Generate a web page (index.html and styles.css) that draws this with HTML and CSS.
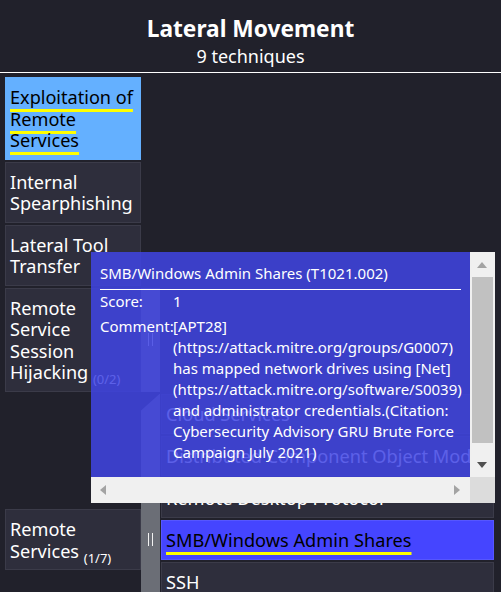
FILE: index.html
```html
<!DOCTYPE html>
<html>
<head>
<meta charset="utf-8">
<link rel="stylesheet" href="styles.css">
</head>
<body>
<div class="tactic">
  <div class="tactic-header">
    <div class="tactic-name">Lateral Movement</div>
    <div class="tactic-count">9 techniques</div>
  </div>
  <div class="rows">
    <div class="row">
      <div class="tech selected"><span class="mark">Exploitation of</span><br><span class="mark">Remote</span><br><span class="mark">Services</span></div>
    </div>
    <div class="row">
      <div class="tech">Internal<br>Spearphishing</div>
    </div>
    <div class="row">
      <div class="tech">Lateral Tool<br>Transfer</div>
    </div>
    <div class="row">
      <div class="tech">Remote<br>Service<br>Session<br>Hijacking <span class="ratio">(0/2)</span></div>
      <div class="sidebar"><span class="grip"></span></div>
    </div>
    <div class="row">
      <div class="tech centered">Remote<br>Services <span class="ratio">(1/7)</span></div>
      <div class="sidebar expanded"><span class="grip"></span></div>
      <div class="subs">
        <div class="sub">Cloud Services</div>
        <div class="sub">Distributed Component Object Model</div>
        <div class="sub">Remote Desktop Protocol</div>
        <div class="sub selected"><span class="mark">SMB/Windows Admin Shares</span></div>
        <div class="sub">SSH</div>
        <div class="sub">VNC</div>
        <div class="sub">Windows Remote Management</div>
      </div>
    </div>
  </div>
</div>

<div class="tooltip">
  <div class="tt-body">
    <div class="tt-title">SMB/Windows Admin Shares (T1021.002)</div>
    <div class="tt-grid">
      <div class="tt-label">Score:</div>
      <div class="tt-value">1</div>
      <div class="tt-label">Comment:</div>
      <div class="tt-value">[APT28] (https://attack.mitre.org/groups/G0007) has mapped network drives using [Net] (https://attack.mitre.org/software/S0039) and administrator credentials.(Citation: Cybersecurity Advisory GRU Brute Force Campaign July 2021)</div>
    </div>
  </div>
  <div class="vscroll">
    <span class="arrow up"></span>
    <span class="vthumb"></span>
    <span class="arrow down"></span>
  </div>
  <div class="hscroll">
    <span class="arrow left"></span>
    <span class="arrow right"></span>
  </div>
  <div class="corner"></div>
</div>
</body>
</html>
```
FILE: styles.css
```css
* { box-sizing: border-box; }

html, body {
  margin: 0;
  padding: 0;
}

body {
  width: 501px;
  height: 592px;
  overflow: hidden;
  position: relative;
  background: #21212b;
  color: #ffffff;
  font-family: "Noto Sans", "Open Sans", sans-serif;
}

.tactic-header {
  height: 73px;
  padding-top: 16px;
  text-align: center;
  border-bottom: 1px solid #ffffff;
}

.tactic-name {
  font-weight: 700;
  font-size: 22.7px;
  line-height: 26px;
}

.tactic-count {
  font-size: 18px;
  line-height: 22px;
  margin-top: 3px;
}

.rows {
  padding: 4px 0 0 5px;
}

.row {
  display: grid;
  grid-template-columns: 136px 20px 333px;
  margin-bottom: 2px;
}

.tech {
  grid-column: 1;
  background: #2e2e3c;
  border: 1px solid #3b3b49;
  padding: 9px 1px 7px 4px;
  font-size: 18.1px;
  line-height: 21.5px;
  color: #ffffff;
  white-space: nowrap;
}

.tech.centered {
  align-self: center;
}

.tech.selected {
  background: #64b0ff;
  border-color: #64b0ff;
  color: #000000;
}

.mark {
  text-decoration: underline;
  text-decoration-color: #ffff00;
  text-decoration-thickness: 3px;
  text-underline-offset: 5px;
}

.ratio {
  font-size: 13px;
  vertical-align: sub;
  line-height: 0;
}

.sidebar {
  grid-column: 2;
  width: 19px;
  background: #6b6e76;
  display: flex;
  align-items: center;
  justify-content: center;
}

.sidebar.expanded {
  clip-path: polygon(0 17px, 100% 0, 100% 100%, 0 100%);
}

.grip {
  width: 5px;
  height: 13px;
  border-left: 1px solid #f2f2f2;
  border-right: 1px solid #f2f2f2;
}

.subs {
  grid-column: 3;
  display: flex;
  flex-direction: column;
  gap: 2px;
}

.sub {
  height: 40px;
  background: #2e2e3c;
  border: 1px solid #3b3b49;
  padding: 9px 4px 0;
  font-size: 18.2px;
  line-height: 21.5px;
  white-space: nowrap;
}

.sub.selected {
  background: #4545ff;
  border-color: #5656ff;
  color: #000000;
}

/* tooltip */
.tooltip {
  position: absolute;
  left: 91px;
  top: 252px;
  width: 404px;
  height: 251px;
  display: grid;
  grid-template-columns: 379px 25px;
  grid-template-rows: 225px 26px;
}

.tt-body {
  background: rgba(64, 68, 228, 0.85);
  padding: 11px 9px 0;
  font-size: 15px;
  line-height: 21px;
  color: #ffffff;
  overflow: hidden;
}

.tt-title {
  padding-bottom: 5px;
  border-bottom: 1px solid #ffffff;
  white-space: nowrap;
}

.tt-grid {
  display: grid;
  grid-template-columns: 73px minmax(0, 1fr);
  row-gap: 4px;
  padding-top: 1px;
}

.vscroll {
  background: #f0f0f0;
  position: relative;
}

.vthumb {
  position: absolute;
  left: 2px;
  right: 2px;
  top: 25px;
  height: 166px;
  background: #c1c1c1;
}

.hscroll {
  background: #f0f0f0;
  position: relative;
}

.corner {
  background: #dcdcdc;
}

.arrow {
  position: absolute;
  width: 0;
  height: 0;
  border-style: solid;
  border-color: transparent;
}

.arrow.up {
  left: 7px;
  top: 10px;
  border-width: 0 5px 6px 5px;
  border-bottom-color: #a3a3a3;
}

.arrow.down {
  left: 7px;
  top: 210px;
  border-width: 6px 5px 0 5px;
  border-top-color: #505050;
}

.arrow.left {
  left: 9px;
  top: 8px;
  border-width: 5px 6px 5px 0;
  border-right-color: #a3a3a3;
}

.arrow.right {
  left: 363px;
  top: 8px;
  border-width: 5px 0 5px 6px;
  border-left-color: #a3a3a3;
}
```
